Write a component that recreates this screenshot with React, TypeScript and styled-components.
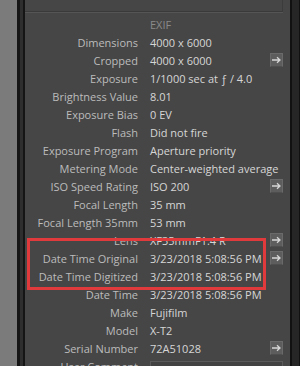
import React from 'react';
import styled, { createGlobalStyle } from 'styled-components';

const GlobalStyle = createGlobalStyle`
  html, body {
    margin: 0;
    padding: 0;
    background: #1c1c1c;
    overflow: hidden;
  }
  body {
    font-family: 'Open Sans', 'Noto Sans', sans-serif;
  }
`;

type Row = {
  label: string;
  value: string;
  jump?: boolean;
};

const rows: Row[] = [
  { label: 'Dimensions', value: '4000 x 6000' },
  { label: 'Cropped', value: '4000 x 6000', jump: true },
  { label: 'Exposure', value: '1/1000 sec at \u0192 / 4.0' },
  { label: 'Brightness Value', value: '8.01' },
  { label: 'Exposure Bias', value: '0 EV' },
  { label: 'Flash', value: 'Did not fire' },
  { label: 'Exposure Program', value: 'Aperture priority' },
  { label: 'Metering Mode', value: 'Center-weighted average' },
  { label: 'ISO Speed Rating', value: 'ISO 200', jump: true },
  { label: 'Focal Length', value: '35 mm' },
  { label: 'Focal Length 35mm', value: '53 mm' },
  { label: 'Lens', value: 'XF35mmF1.4 R', jump: true },
  { label: 'Date Time Original', value: '3/23/2018 5:08:56 PM', jump: true },
  { label: 'Date Time Digitized', value: '3/23/2018 5:08:56 PM' },
  { label: 'Date Time', value: '3/23/2018 5:08:56 PM' },
  { label: 'Make', value: 'Fujifilm' },
  { label: 'Model', value: 'X-T2' },
  { label: 'Serial Number', value: '72A51028', jump: true },
];

const JumpArrow = () => (
  <svg width="11" height="8" viewBox="0 0 11 8">
    <path d="M1 4h8M6 1.2L9 4L6 6.8" stroke="#d6d6d6" strokeWidth="1.3" fill="none" />
  </svg>
);

const App = (): JSX.Element => {
  return (
    <>
      <GlobalStyle />
      <Screen>
        <Filmstrip />
        <Divider />
        <Panel>
          <TopField />
          <Section>
            <MetaRow>
              <Label />
              <Heading>EXIF</Heading>
            </MetaRow>
            {rows.map((r) => (
              <MetaRow key={r.label}>
                <Label>{r.label}</Label>
                <Value>{r.value}</Value>
                {r.jump && (
                  <JumpButton>
                    <JumpArrow />
                  </JumpButton>
                )}
              </MetaRow>
            ))}
            <MetaRow>
              <Label>User Comment</Label>
              <CommentField />
            </MetaRow>
          </Section>
          <Highlight />
        </Panel>
        <RightEdge />
      </Screen>
    </>
  );
};

export default App;

const Screen = styled.div`
  display: flex;
  width: 300px;
  height: 366px;
  overflow: hidden;
`;
const Filmstrip = styled.div`
  width: 17px;
  flex: none;
  background: #7b7b7b;
`;
const Divider = styled.div`
  width: 8px;
  flex: none;
  box-sizing: border-box;
  background: #2e2e2e;
  border-left: 3px solid #151515;
  border-right: 2px solid #151515;
`;
const Panel = styled.div`
  position: relative;
  width: 265px;
  flex: none;
  background: #464646;
  height: 100%;
`;
const RightEdge = styled.div`
  flex: 1;
  box-sizing: border-box;
  background: #262626;
  border-left: 2px solid #111;
  border-right: 1px solid #111;
`;
const TopField = styled.div`
  width: 258px;
  height: 12px;
  box-sizing: border-box;
  border-bottom: 1px solid #3a3a3a;
  border-right: 1px solid #3c3c3c;
  box-shadow: 0 1px 0 #555;
`;
const Section = styled.div`
  display: flex;
  flex-direction: column;
  padding-top: 3px;
`;
const MetaRow = styled.div`
  display: flex;
  align-items: center;
  height: 18px;
  padding-right: 7px;
  font-size: 11px;
  white-space: nowrap;
`;
const Label = styled.div`
  width: 113px;
  flex: none;
  text-align: right;
  color: #bcbcbc;
`;
const Heading = styled.div`
  margin-left: 12px;
  color: #8a8a8a;
`;
const Value = styled.div`
  margin-left: 12px;
  flex: 1;
  min-width: 0;
  color: #d6d6d6;
`;
const JumpButton = styled.div`
  width: 13px;
  height: 14px;
  flex: none;
  box-sizing: border-box;
  display: flex;
  align-items: center;
  justify-content: center;
  background: #5d5d5d;
  border: 1px solid #6a6a6a;
  border-bottom-color: #4e4e4e;
`;
const CommentField = styled.div`
  margin-left: 12px;
  margin-top: 6px;
  flex: 1;
  height: 16px;
  box-sizing: border-box;
  background: #424242;
  border: 1px solid #5a5a5a;
`;
const Highlight = styled.div`
  position: absolute;
  left: 2px;
  top: 238px;
  width: 239px;
  height: 52px;
  box-sizing: border-box;
  border: 3px solid #e03a3c;
`;
